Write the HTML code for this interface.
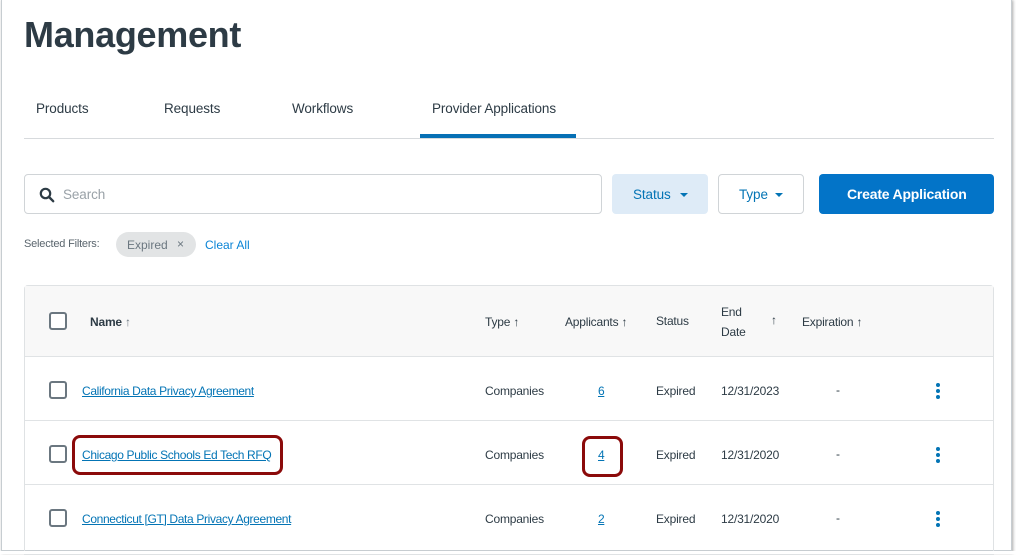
<!DOCTYPE html>
<html><head><meta charset="utf-8"><style>
*{margin:0;padding:0;box-sizing:border-box}
body{width:1016px;height:554px;background:#fff;font-family:"Liberation Sans",sans-serif;color:#2d3b45;position:relative;overflow:hidden}
.a{position:absolute;white-space:nowrap}
.frame{position:absolute;left:1px;top:-2px;width:1011px;height:553px;border:1px solid #c7cdd1;box-shadow:1px 2px 3px rgba(0,0,0,.35)}
.t{font-size:13.5px;color:#2d3b45;letter-spacing:-0.1px}
.s{font-size:12px;color:#2d3b45;letter-spacing:-0.2px}
.lnk{font-size:12px;color:#0374b5;text-decoration:underline;letter-spacing:-0.35px}
.cb{position:absolute;left:49px;width:18px;height:18px;border:2px solid #6b7780;border-radius:3px;background:#fff}
.hr{position:absolute;left:25px;width:968px;height:1px;background:#e0e3e5}
.dots{position:absolute;left:936px;width:4px}
.dots i{display:block;width:4px;height:4px;border-radius:2px;background:#0374b5;margin-bottom:2px}
.red{position:absolute;border:3px solid #8b0a0a;border-radius:8px}
</style></head><body>
<div class="frame"></div>
<div class="a" style="left:24px;top:14px;font-size:36px;font-weight:bold;color:#2d3b45;letter-spacing:-0.3px">Management</div>
<div class="a t" style="left:36px;top:101px">Products</div>
<div class="a t" style="left:164px;top:101px">Requests</div>
<div class="a t" style="left:292px;top:101px">Workflows</div>
<div class="a t" style="left:432px;top:101px;letter-spacing:-0.1px">Provider Applications</div>
<div class="a" style="left:24px;top:138px;width:970px;height:1px;background:#d7dadd"></div>
<div class="a" style="left:420px;top:134px;width:156px;height:4px;background:#0770b5"></div>

<div class="a" style="left:24px;top:174px;width:578px;height:40px;border:1px solid #d0d4d7;border-radius:4px"></div>
<svg class="a" style="left:39px;top:187px" width="16" height="16" viewBox="0 0 16 16"><circle cx="6.5" cy="6.5" r="4.7" fill="none" stroke="#2d3b45" stroke-width="2.2"/><path d="M10 10l4.2 4.2" stroke="#2d3b45" stroke-width="2.4" stroke-linecap="round"/></svg>
<div class="a t" style="left:63px;top:187px;color:#9aa2a8">Search</div>
<div class="a" style="left:612px;top:174px;width:96px;height:40px;background:#deebf7;border-radius:4px"></div>
<div class="a t" style="left:633px;top:187px;color:#0374b5">Status</div>
<div class="a" style="left:680px;top:193px;border:4px solid transparent;border-top:4px solid #0374b5;border-bottom:0"></div>
<div class="a" style="left:718px;top:174px;width:86px;height:40px;border:1px solid #d0d4d7;border-radius:4px"></div>
<div class="a t" style="left:739px;top:187px;color:#0374b5">Type</div>
<div class="a" style="left:775px;top:193px;border:4px solid transparent;border-top:4px solid #0374b5;border-bottom:0"></div>
<div class="a" style="left:819px;top:174px;width:175px;height:40px;background:#0374c8;border-radius:4px"></div>
<div class="a" style="left:847px;top:186px;font-size:14px;color:#fff;font-weight:bold;letter-spacing:-0.2px">Create Application</div>

<div class="a" style="left:24px;top:238px;font-size:11px;color:#5a656d;letter-spacing:-0.2px">Selected Filters:</div>
<div class="a" style="left:116px;top:232px;width:80px;height:25px;background:#e2e4e5;border-radius:13px"></div>
<div class="a" style="left:127px;top:238px;font-size:12px;color:#6b7780">Expired</div>
<div class="a" style="left:177px;top:237px;font-size:12px;color:#6b7780">×</div>
<div class="a" style="left:205px;top:238px;font-size:12px;color:#0a84d6">Clear All</div>

<div class="a" style="left:24px;top:285px;width:970px;height:270px;border:1px solid #dfe2e4;border-radius:4px 4px 0 0"></div>
<div class="a" style="left:25px;top:286px;width:968px;height:70px;background:#f8f8f8"></div>
<div class="cb" style="top:312px"></div>
<div class="a s" style="left:90px;top:315px;font-weight:bold">Name <span style="font-weight:normal;color:#6b7780">↑</span></div>
<div class="a s" style="left:485px;top:315px">Type ↑</div>
<div class="a s" style="left:565px;top:315px">Applicants ↑</div>
<div class="a s" style="left:656px;top:314px">Status</div>
<div class="a s" style="left:721px;top:302px;line-height:20px">End<br>Date</div>
<div class="a s" style="left:771px;top:313px">↑</div>
<div class="a s" style="left:802px;top:315px">Expiration ↑</div>
<div class="hr" style="top:356px"></div>

<div class="cb" style="top:381px"></div>
<div class="a lnk" style="left:82px;top:384px">California Data Privacy Agreement</div>
<div class="a s" style="left:485px;top:384px">Companies</div>
<div class="a lnk" style="left:598px;top:384px">6</div>
<div class="a s" style="left:656px;top:384px">Expired</div>
<div class="a s" style="left:721px;top:384px">12/31/2023</div>
<div class="a s" style="left:836px;top:383px">-</div>
<div class="dots" style="top:383px"><i></i><i></i><i></i></div>
<div class="hr" style="top:420px"></div>

<div class="cb" style="top:445px"></div>
<div class="red" style="left:72px;top:435px;width:211px;height:40px"></div>
<div class="a lnk" style="left:82px;top:448px">Chicago Public Schools Ed Tech RFQ</div>
<div class="a s" style="left:485px;top:448px">Companies</div>
<div class="red" style="left:582px;top:436px;width:41px;height:41px"></div>
<div class="a lnk" style="left:598px;top:448px">4</div>
<div class="a s" style="left:656px;top:448px">Expired</div>
<div class="a s" style="left:721px;top:448px">12/31/2020</div>
<div class="a s" style="left:836px;top:447px">-</div>
<div class="dots" style="top:447px"><i></i><i></i><i></i></div>
<div class="hr" style="top:484px"></div>

<div class="cb" style="top:509px"></div>
<div class="a lnk" style="left:82px;top:512px">Connecticut [GT] Data Privacy Agreement</div>
<div class="a s" style="left:485px;top:512px">Companies</div>
<div class="a lnk" style="left:598px;top:512px">2</div>
<div class="a s" style="left:656px;top:512px">Expired</div>
<div class="a s" style="left:721px;top:512px">12/31/2020</div>
<div class="a s" style="left:836px;top:511px">-</div>
<div class="dots" style="top:511px"><i></i><i></i><i></i></div>
<div class="a" style="left:0;top:551px;width:1016px;height:3px;background:#fff"></div>
</body></html>
